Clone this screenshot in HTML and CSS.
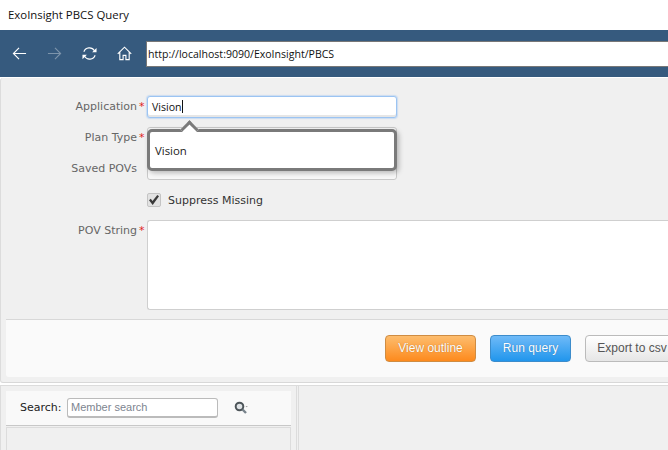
FILE: index.html
```html
<!DOCTYPE html>
<html lang="en">
<head>
<meta charset="utf-8">
<title>ExoInsight PBCS Query</title>
<link rel="stylesheet" href="styles.css">
</head>
<body>
<div class="window">
  <header class="titlebar">ExoInsight PBCS Query</header>
  <nav class="toolbar">
    <svg class="nav-icon" viewBox="0 0 16 16"><path d="M15 8H1.500M7.500 2L1.500 8l6 6"/></svg>
    <svg class="nav-icon dim" viewBox="0 0 16 16"><path d="M1 8h13.500M8.500 2l6 6-6 6"/></svg>
    <svg class="nav-icon" viewBox="0 0 16 16"><path d="M2 6.200A6.300 6.300 0 0 1 13.300 5M14 9.800A6.300 6.300 0 0 1 2.700 11"/><path class="solid" d="M15.500 2v4.700h-4.700zM.5 14V9.300h4.700z"/></svg>
    <svg class="nav-icon" viewBox="0 0 16 16"><path d="M.8 8.300L8 1.300l7.200 7M3 6.500V14.500h3.500V10h3v4.500H13V6.500"/></svg>
    <div class="address">http://localhost:9090/ExoInsight/PBCS</div>
  </nav>
  <main class="form-panel">
    <div class="fields">
      <label class="label">Application<span class="star">*</span></label>
      <div class="field-anchor">
        <div class="input focused">Vision<span class="caret"></span></div>
        <div class="popup">
          <span class="popup-arrow"></span>
          <div class="popup-item">Vision</div>
        </div>
      </div>
      <label class="label">Plan Type<span class="star">*</span></label>
      <div class="input"></div>
      <label class="label">Saved POVs<span class="star"></span></label>
      <div class="input"></div>
      <span></span>
      <div class="check-row">
        <span class="checkbox">
          <svg viewBox="0 0 12 12"><path d="M1 6.300l1.800-1.500 1.700 2.200L9.300 1l1.700 1.200L4.700 11z"/></svg>
        </span>
        <span>Suppress Missing</span>
      </div>
      <label class="label">POV String<span class="star">*</span></label>
      <div class="textarea"></div>
    </div>
    <div class="actions">
      <button class="btn btn-orange">View outline</button>
      <button class="btn btn-blue">Run query</button>
      <button class="btn btn-grey">Export to csv</button>
    </div>
  </main>
  <section class="lower">
    <div class="members">
      <div class="member-card">
        <div class="search-row">
          <span class="search-label">Search:</span>
          <div class="search-input">Member search</div>
          <svg class="search-icon" viewBox="0 0 14 14"><circle cx="5.500" cy="5.500" r="3.800"/><path class="handle" d="M8.500 8.500l3.500 3.500"/><path class="tick" d="M11.500 5h2.300l-1.100 1.300z"/></svg>
        </div>
        <div class="member-body"></div>
      </div>
    </div>
    <div class="results"></div>
  </section>
</div>
</body>
</html>
```
FILE: styles.css
```css
html, body {
  margin: 0;
  padding: 0;
  background: #fff;
}
.window {
  width: 668px;
  height: 450px;
  overflow: hidden;
  display: flex;
  flex-direction: column;
  font-family: "DejaVu Sans", sans-serif;
  font-size: 11px;
  color: #222;
}
.titlebar {
  flex: none;
  height: 30px;
  line-height: 30px;
  padding-left: 8px;
  background: #fff;
  font-family: "Open Sans", sans-serif;
  font-size: 11.400px;
  color: #111;
}
.toolbar {
  flex: none;
  height: 47px;
  box-sizing: border-box;
  background: #365a7e;
  display: flex;
  align-items: flex-start;
  padding: 11px 0 0 12px;
  gap: 20px;
}
.nav-icon {
  flex: none;
  width: 15px;
  height: 15px;
  margin-top: 5px;
  fill: none;
  stroke: #fff;
  stroke-width: 1.200;
}
.nav-icon.dim {
  opacity: .35;
}
.nav-icon .solid {
  fill: #fff;
  stroke: none;
}
.address {
  flex: none;
  width: 530px;
  height: 26px;
  margin-left: -6px;
  box-sizing: border-box;
  border: 1px solid #777;
  background: #fff;
  line-height: 24px;
  padding-left: 1px;
  font-family: "Open Sans", sans-serif;
  font-size: 10.560px;
  color: #111;
  white-space: nowrap;
}
.form-panel {
  flex: none;
  height: 305px;
  box-sizing: border-box;
  margin-top: 1px;
  background: #f0f0f0;
  border-left: 1px solid #dcdcdc;
  border-bottom: 1px solid #d8d8d8;
  border-radius: 3px 0 0 3px;
  padding-top: 18px;
  display: flex;
  flex-direction: column;
}
.fields {
  flex: none;
  display: grid;
  grid-template-columns: 145px 560px;
  grid-template-rows: 22px 22px 22px 22px 90px;
  row-gap: 9px;
  column-gap: 1px;
}
.label {
  text-align: right;
  line-height: 21px;
  color: #666;
  white-space: nowrap;
}
.star {
  display: inline-block;
  width: 7px;
  color: #e02020;
  text-align: left;
  margin-left: 2px;
}
.field-anchor {
  position: relative;
  width: 250px;
}
.input {
  box-sizing: border-box;
  width: 250px;
  height: 22px;
  background: #f7f7f7;
  border: 1px solid #c8c8c8;
  border-radius: 3px;
}
.input.focused {
  background: #fff;
  border: 1px solid #9cc4f2;
  box-shadow: inset 0 -2px 0 #e6e6e6, 0 0 1px 1px rgba(156, 196, 242, .45);
  line-height: 20px;
  padding-left: 4px;
  font-family: "Open Sans", sans-serif;
  font-size: 10.600px;
  color: #111;
}
.caret {
  display: inline-block;
  width: 1px;
  height: 13px;
  background: #111;
  vertical-align: -2px;
}
.popup {
  position: absolute;
  left: 0;
  top: 33px;
  width: 250px;
  height: 42px;
  box-sizing: border-box;
  background: #fff;
  border: 3px solid #7a7a7a;
  border-radius: 5px;
  box-shadow: 2px 2px 5px rgba(0, 0, 0, .25);
  z-index: 2;
}
.popup-arrow {
  position: absolute;
  left: 33px;
  top: -9px;
  width: 10px;
  height: 10px;
  background: #fff;
  border-left: 3px solid #7a7a7a;
  border-top: 3px solid #7a7a7a;
  transform: rotate(45deg);
  transform-origin: center;
}
.popup-item {
  padding: 11px 0 0 5px;
  font-family: "Open Sans", sans-serif;
  font-size: 11.400px;
  color: #222;
}
.check-row {
  display: flex;
  align-items: center;
  gap: 7px;
  height: 14px;
  margin-top: 4px;
  color: #333;
}
.checkbox {
  width: 14px;
  height: 14px;
  box-sizing: border-box;
  border: 1px solid #c4c4c4;
  border-radius: 2px;
  background: #e2e2e2;
  display: flex;
}
.checkbox svg {
  width: 12px;
  height: 12px;
  fill: #3a3a3a;
}
.textarea {
  box-sizing: border-box;
  background: #fff;
  border: 1px solid #cfcfcf;
  border-right: 0;
  border-radius: 3px 0 0 3px;
}
.actions {
  flex: none;
  margin: 9px 0 0 5px;
  height: 58px;
  box-sizing: border-box;
  background: #fafafa;
  border-top: 1px solid #d8d8d8;
  border-radius: 0 0 0 3px;
  display: flex;
  align-items: flex-start;
  padding: 15px 0 0 379px;
  gap: 14px;
}
.btn {
  flex: none;
  height: 27px;
  box-sizing: border-box;
  border-radius: 4px;
  padding: 0 0 2px;
  font-family: "Liberation Sans", sans-serif;
  font-size: 12px;
}
.btn-orange {
  width: 91px;
  color: #fff;
  background: linear-gradient(#fdbd6e, #fd8a1d);
  border: 1px solid #cf8c42;
  text-shadow: 0 0 1px rgba(120, 70, 0, .6);
}
.btn-blue {
  width: 81px;
  color: #fff;
  background: linear-gradient(#6fbaf8, #2196ec);
  border: 1px solid #3c8ccb;
  text-shadow: 0 0 1px rgba(0, 60, 120, .6);
}
.btn-grey {
  width: 94px;
  color: #555;
  background: linear-gradient(#fff, #e6e6e6);
  border: 1px solid #bbb;
}
.lower {
  flex: 1;
  margin-top: 2px;
  display: flex;
  border-top: 1px solid #dcdcdc;
  background: #f0f0f0;
}
.members {
  flex: none;
  width: 297px;
  box-sizing: border-box;
  border-left: 1px solid #dcdcdc;
  border-right: 1px solid #dcdcdc;
  padding: 5px 5px 0 5px;
}
.member-card {
  height: 100%;
  display: flex;
  flex-direction: column;
}
.search-row {
  flex: none;
  height: 35px;
  box-sizing: border-box;
  background: #f9f9f9;
  border-bottom: 1px solid #c8c8c8;
  display: flex;
  align-items: flex-start;
  padding: 7px 0 0 14px;
}
.search-label {
  width: 47px;
  line-height: 20px;
  color: #222;
}
.search-input {
  flex: none;
  width: 151px;
  height: 20px;
  box-sizing: border-box;
  background: #fff;
  border: 1px solid #bbb;
  border-bottom-width: 2px;
  border-radius: 3px;
  padding-left: 3px;
  line-height: 16px;
  font-family: "Liberation Sans", sans-serif;
  font-size: 11px;
  color: #7d8590;
}
.search-icon {
  flex: none;
  width: 14px;
  height: 14px;
  margin: 3px 0 0 16px;
  fill: #dfe3e6;
  stroke: #4d5559;
  stroke-width: 2;
}
.search-icon .handle {
  stroke: #78838c;
  stroke-width: 2.400;
}
.search-icon .tick {
  fill: #999;
  stroke: none;
}
.member-body {
  flex: 1;
  margin-top: 1px;
  box-sizing: border-box;
  border: 1px solid #dcdcdc;
  border-bottom: 0;
  background: #f0f0f0;
}
.results {
  flex: 1;
  margin-left: 1px;
  border-left: 1px solid #dcdcdc;
  background: #f0f0f0;
}
```
